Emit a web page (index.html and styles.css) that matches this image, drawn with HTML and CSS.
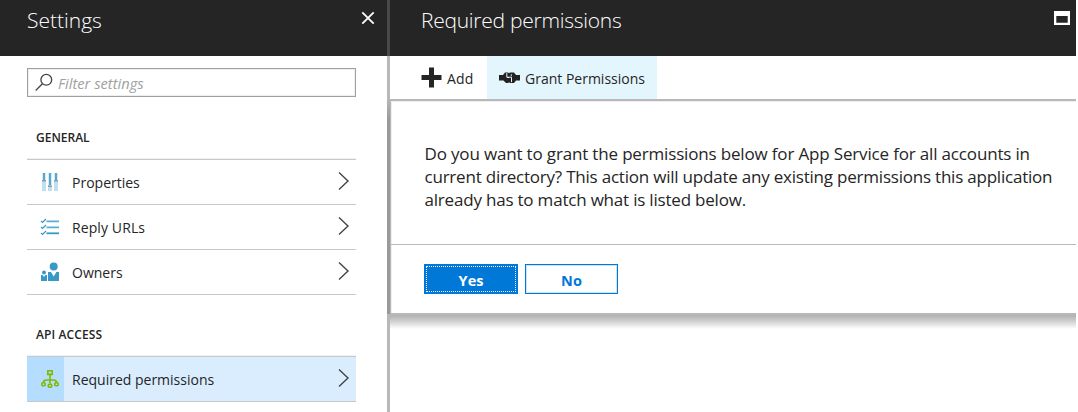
FILE: index.html
```html
<!DOCTYPE html>
<html lang="en">
<head>
<meta charset="utf-8">
<title>Required permissions</title>
<link rel="stylesheet" href="styles.css">
</head>
<body>
<div class="app">
  <aside class="settings">
    <header class="blade-header">
      <h1 class="title settings-title">Settings</h1>
      <svg class="close" width="14" height="14" viewBox="0 0 14 14"><path d="M1.3 1.3l11.4 11.4M12.7 1.3L1.3 12.7" stroke="#fff" stroke-width="1.8"/></svg>
    </header>
    <div class="search">
      <svg width="19" height="19" viewBox="0 0 19 19" fill="none" stroke="#444" stroke-width="1.3"><circle cx="11.3" cy="6.8" r="5.4"/><path d="M7.4 10.8L.7 17.5"/></svg>
      <span class="placeholder">Filter settings</span>
    </div>
    <h2 class="group general">GENERAL</h2>
    <nav class="list">
      <a class="item"><span class="icon"><svg width="18" height="20" viewBox="0 0 18 20"><path fill="#dceaf1" d="M1 1h4v7H1zM7 1h4v12H7zM13 1h4v7h-4z"/><path fill="#bfe0ee" d="M1 8h4v11H1zM7 13h4v6H7zM13 8h4v11h-4z"/><path fill="#4cadd4" d="M2 1h2v7H2zM8 1h2v12H8zM14 1h2v7h-2z"/><path fill="#999" d="M1 8h4v1.5H1zM7 13.5h4V15H7zM13 8h4v1.5h-4z"/></svg></span><span class="label properties">Properties</span><svg class="chevron" width="12" height="20" viewBox="0 0 12 20"><path d="M1 1.5L10 10L1 18.5"/></svg></a>
      <a class="item"><span class="icon"><svg width="20" height="18" viewBox="0 0 20 18" fill="none" stroke="#3999c6"><path stroke-width="1.8" stroke="#59aed3" d="M6.5 3.3H19M6.5 9.3H19"/><path stroke-width="1.8" d="M6.5 15.3H19"/><path stroke-width="1.2" d="M1 3l1.6 1.5L6 1M1 9l1.6 1.5L6 7M1 15l1.6 1.5L6 13"/></svg></span><span class="label reply">Reply URLs</span><svg class="chevron" width="12" height="20" viewBox="0 0 12 20"><path d="M1 1.5L10 10L1 18.5"/></svg></a>
      <a class="item"><span class="icon"><svg width="20" height="20" viewBox="0 0 20 20" fill="#3999c6"><circle cx="13.7" cy="4.5" r="4"/><path d="M8 19v-9h3l2.7 4.5 2.7-4.5H19v9zM1 19v-6h1.6L4 15l1.4-2H7v6z"/><circle cx="4" cy="10.5" r="2"/></svg></span><span class="label owners">Owners</span><svg class="chevron" width="12" height="20" viewBox="0 0 12 20"><path d="M1 1.5L10 10L1 18.5"/></svg></a>
    </nav>
    <h2 class="group access">API ACCESS</h2>
    <nav class="list">
      <a class="item selected"><span class="icon"><svg width="20" height="20" viewBox="0 0 20 20" fill="none" stroke="#7fba00" stroke-width="1.6"><path d="M7.8 1.8h4.4v3.6H7.8zM10 5.5v9M3.5 13.5c0-2 1-2.5 3-2.5h7c2 0 3 .5 3 2.5"/><rect x="1.8" y="13.8" width="3.4" height="3" rx="1"/><rect x="8.3" y="15.2" width="3.4" height="3" rx="1"/><rect x="14.8" y="13.8" width="3.4" height="3" rx="1"/></svg></span><span class="label required">Required permissions</span><svg class="chevron" width="12" height="20" viewBox="0 0 12 20"><path d="M1 1.5L10 10L1 18.5"/></svg></a>
    </nav>
  </aside>
  <div class="divider"></div>
  <main class="permissions">
    <header class="blade-header">
      <h1 class="title permissions-title">Required permissions</h1>
      <svg class="maximize" width="16" height="14" viewBox="0 0 16 14"><path fill="#fff" fill-rule="evenodd" d="M0 0h16v14H0zM2.3 5v6.8h11.4V5z"/></svg>
    </header>
    <div class="toolbar">
      <button class="tool add"><svg width="21" height="21" viewBox="0 0 21 21"><path fill="#252525" d="M8 .5h5V8h7.5v5H13v7.5H8V13H.5V8H8z"/></svg><span class="add-text">Add</span></button>
      <button class="tool grant"><svg width="21" height="12" viewBox="0 0 21 12"><path fill="#222" d="M0 3h4l2-2.5h3l1 .8 1-.8h4L17 3h4v5.5h-4L15 11h-4l-1-.7-1 .7H7L4.5 8.5H0z"/><path d="M7.8 1v4.2h4.7v5M8 5.5h2M12.3 2.3v1.8" fill="none" stroke="#e3f6fd"/></svg><span class="grant-text">Grant Permissions</span></button>
    </div>
    <section class="dialog">
      <p class="message"><span class="line one">Do you want to grant the permissions below for App Service for all accounts in</span><span class="line two">current directory? This action will update any existing permissions this application</span><span class="line three">already has to match what is listed below.</span></p>
      <div class="actions"><button class="choice yes"><span class="focus">Yes</span></button><button class="choice no">No</button></div>
    </section>
    <div class="shadow"></div>
  </main>
</div>
</body>
</html>
```
FILE: styles.css
```css
* { box-sizing: border-box; }
body { margin: 0; background: #fff; color: #252525; font-family: "Open Sans", "Noto Sans", sans-serif; overflow: hidden; }
h1, h2, p { margin: 0; }
button { border: 0; padding: 0; background: none; font: inherit; color: inherit; }
svg { display: block; flex: none; }
.app { display: flex; width: 1076px; height: 412px; }
.settings { width: 387px; flex: none; }
.blade-header { height: 56px; background: #252525; color: #fff; display: flex; justify-content: space-between; align-items: flex-start; }
.title { font-size: 21px; line-height: 28px; font-weight: 300; padding-top: 6px; white-space: nowrap; }
.settings-title { padding-left: 27px; }
.permissions-title { padding-left: 31px; letter-spacing: -0.26px; }
.close { margin: 11px 12px 0 0; }
.maximize { margin: 11px 6px 0 0; }
.search { margin: 12px 31px 0 27px; height: 29px; border: 1px solid #a0a0a0; box-shadow: inset 0 0 0 1px #eee; display: flex; align-items: center; padding-left: 7px; }
.placeholder { margin-left: 4px; font-size: 14.7px; font-style: italic; color: #a0a0a0; }
.group { margin-left: 36px; font-size: 12px; line-height: 18px; font-weight: 600; }
.general { margin-top: 32px; }
.access { margin-top: 31px; letter-spacing: 0.1px; }
.list { margin: 12px 31px 0 27px; border-top: 1px solid #c8c8c8; box-shadow: 0 -1px #f1f1f1; }
.item { height: 45px; display: flex; align-items: center; border-bottom: 1px solid #c8c8c8; font-size: 14px; }
.icon { width: 37px; height: 44px; padding-left: 9px; display: flex; align-items: center; justify-content: center; }
.label { margin-left: 8px; white-space: nowrap; }
.reply { letter-spacing: 0.1px; }
.chevron { margin: 0 6px 2px auto; fill: none; stroke: #444; stroke-width: 1.4; }
.selected { background: #d9edff; }
.selected .icon { background: #b5ddff; }
.divider { width: 3px; flex: none; background: linear-gradient(#484848 0 56px, #b8b8b8 56px 98px, #999 120px 314px, #b8b8b8 314px); }
.permissions { width: 686px; flex: none; }
.toolbar { height: 43px; display: flex; }
.tool { display: flex; align-items: center; font-size: 14px; white-space: nowrap; }
.add-text, .grant-text { padding-top: 2px; }
.add { width: 97px; padding-left: 31px; gap: 5px; letter-spacing: 0.2px; }
.grant { width: 170px; padding-left: 12px; gap: 5px; background: #e3f6fd; }
.dialog { height: 216px; border-top: 2px solid #b8b8b8; border-left: 1px solid #b8b8b8; border-bottom: 2px solid #b8b8b8; box-shadow: inset 1px 1px #eee; }
.message { height: 144px; padding: 41px 0 0 33.5px; border-bottom: 1px solid #b8b8b8; font-size: 17px; line-height: 23px; }
.line { display: block; width: max-content; white-space: nowrap; }
.one { letter-spacing: -0.165px; }
.two { letter-spacing: -0.215px; }
.three { letter-spacing: -0.2px; }
.actions { display: flex; gap: 7px; padding: 19px 0 0 33px; }
.choice { width: 94px; height: 30px; border: 1px solid #0078d7; font-size: 14.5px; font-weight: 700; }
.yes { background: #0078d7; color: #fff; padding: 1px; }
.focus { display: flex; align-items: center; justify-content: center; height: 26px; padding-top: 2px; border: 1px dotted #fff; }
.no { width: 93px; padding-top: 2px; color: #0078d7; box-shadow: inset 0 0 0 1px #cce4f7; }
.shadow { height: 14px; background: linear-gradient(#b0b0b0, #d0d0d0 45%, #fff); }
```
